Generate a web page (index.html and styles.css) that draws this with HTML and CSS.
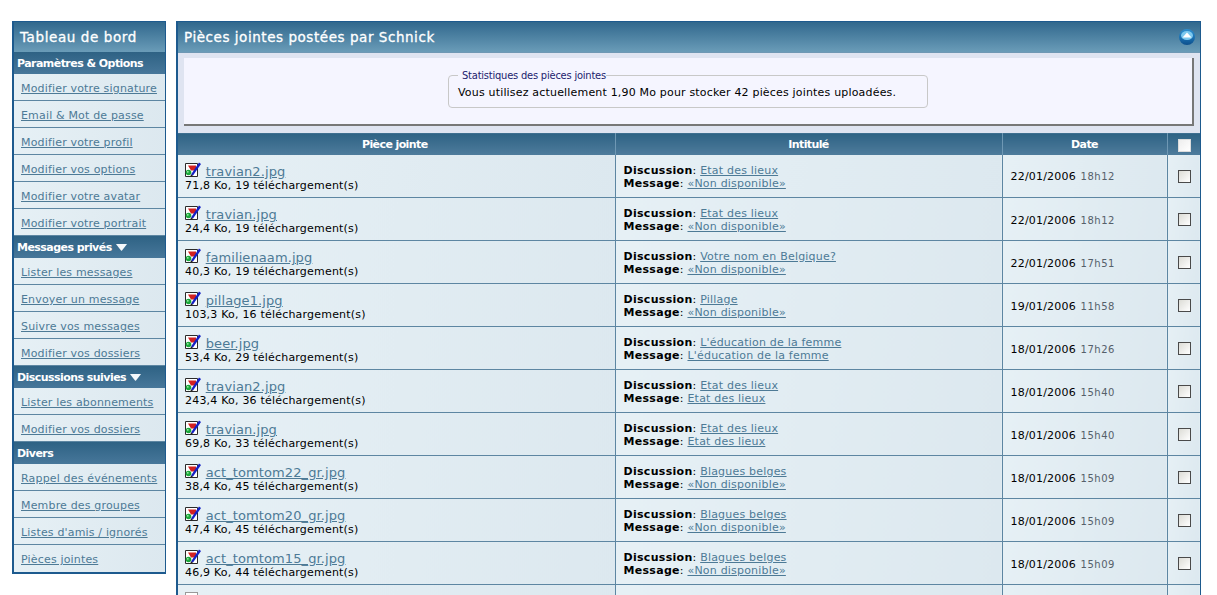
FILE: index.html
```html
<!DOCTYPE html>
<html lang="fr">
<head>
<meta charset="utf-8">
<title>Pièces jointes</title>
<link rel="stylesheet" href="styles.css">
</head>
<body>
<svg class="defs" width="0" height="0">
  <defs>
    <linearGradient id="ball" x1="0" y1="0" x2="0" y2="1">
      <stop offset="0" stop-color="#2f8fcf"/>
      <stop offset=".55" stop-color="#1a6fb0"/>
      <stop offset="1" stop-color="#0d4f8c"/>
    </linearGradient>
    <symbol id="file" viewBox="0 0 16 16">
      <path d="M.5 1.500h12v13H.5z" fill="#fff" stroke="#2a2a2a"/>
      <path d="M3 3.500h8v5H6z" fill="#d22020"/>
      <circle cx="3.500" cy="10.500" r="2.800" fill="#1aa83a"/>
      <circle cx="2.800" cy="9.800" r=".9" fill="#a8f0b0"/>
      <path d="M6 12.500L14 .5l2 1.500-8 11.500z" fill="#1420c4"/>
      <path d="M6 12.500l-.8 2.500 2.800-1.500z" fill="#222"/>
    </symbol>
    <symbol id="down" viewBox="0 0 11 7">
      <path d="M.5 0h10q.5 0 .2.600L6 6.500q-.5.500-1 0L.3.600Q0 0 .5 0z" fill="#f4f8fb"/>
    </symbol>
  </defs>
</svg>
<div class="page">
  <aside class="side">
    <h2 class="side-title">Tableau de bord</h2>
    <h3 class="side-head">Paramètres &amp; Options</h3>
    <a class="side-link" href="#">Modifier votre signature</a>
    <a class="side-link" href="#">Email &amp; Mot de passe</a>
    <a class="side-link" href="#">Modifier votre profil</a>
    <a class="side-link" href="#">Modifier vos options</a>
    <a class="side-link" href="#">Modifier votre avatar</a>
    <a class="side-link" href="#">Modifier votre portrait</a>
    <h3 class="side-head">Messages privés <svg class="arrow"><use href="#down"/></svg></h3>
    <a class="side-link" href="#">Lister les messages</a>
    <a class="side-link" href="#">Envoyer un message</a>
    <a class="side-link" href="#">Suivre vos messages</a>
    <a class="side-link" href="#">Modifier vos dossiers</a>
    <h3 class="side-head">Discussions suivies <svg class="arrow"><use href="#down"/></svg></h3>
    <a class="side-link" href="#">Lister les abonnements</a>
    <a class="side-link" href="#">Modifier vos dossiers</a>
    <h3 class="side-head">Divers</h3>
    <a class="side-link" href="#">Rappel des événements</a>
    <a class="side-link" href="#">Membre des groupes</a>
    <a class="side-link" href="#">Listes d'amis / ignorés</a>
    <a class="side-link last" href="#">Pièces jointes</a>
  </aside>
  <main class="main">
    <div class="main-title">
      <span>Pièces jointes postées par Schnick</span>
      <svg class="collapse" width="16" height="16" viewBox="0 0 16 16">
        <circle cx="8" cy="8" r="8" fill="url(#ball)"/>
        <ellipse cx="8" cy="6.500" rx="6" ry="4.500" fill="#7cc8ee"/>
        <path d="M8 3.500L12.500 8.500h-9z" fill="#fff"/>
      </svg>
    </div>
    <div class="stats">
      <div class="stats-panel">
        <fieldset class="stats-box">
          <legend>Statistiques des pièces jointes</legend>
          Vous utilisez actuellement 1,90 Mo pour stocker 42 pièces jointes uploadées.
        </fieldset>
      </div>
    </div>
    <table class="list">
      <colgroup><col class="c1"><col class="c2"><col class="c3"><col class="c4"></colgroup>
      <thead>
        <tr><th>Pièce jointe</th><th>Intitulé</th><th>Date</th><th><span class="box head-box"></span></th></tr>
      </thead>
      <tbody>
        <tr><td><svg class="ico"><use href="#file"/></svg> <a class="fn" href="#">travian2.jpg</a><br>71,8 Ko, 19 téléchargement(s)</td><td><b>Discussion</b>: <a href="#">Etat des lieux</a><br><b>Message</b>: <a href="#">«Non disponible»</a></td><td>22/01/2006 <span class="time">18h12</span></td><td class="chk"><span class="box"></span></td></tr>
        <tr><td><svg class="ico"><use href="#file"/></svg> <a class="fn" href="#">travian.jpg</a><br>24,4 Ko, 19 téléchargement(s)</td><td><b>Discussion</b>: <a href="#">Etat des lieux</a><br><b>Message</b>: <a href="#">«Non disponible»</a></td><td>22/01/2006 <span class="time">18h12</span></td><td class="chk"><span class="box"></span></td></tr>
        <tr><td><svg class="ico"><use href="#file"/></svg> <a class="fn" href="#">familienaam.jpg</a><br>40,3 Ko, 19 téléchargement(s)</td><td><b>Discussion</b>: <a href="#">Votre nom en Belgique?</a><br><b>Message</b>: <a href="#">«Non disponible»</a></td><td>22/01/2006 <span class="time">17h51</span></td><td class="chk"><span class="box"></span></td></tr>
        <tr><td><svg class="ico"><use href="#file"/></svg> <a class="fn" href="#">pillage1.jpg</a><br>103,3 Ko, 16 téléchargement(s)</td><td><b>Discussion</b>: <a href="#">Pillage</a><br><b>Message</b>: <a href="#">«Non disponible»</a></td><td>19/01/2006 <span class="time">11h58</span></td><td class="chk"><span class="box"></span></td></tr>
        <tr><td><svg class="ico"><use href="#file"/></svg> <a class="fn" href="#">beer.jpg</a><br>53,4 Ko, 29 téléchargement(s)</td><td><b>Discussion</b>: <a href="#">L'éducation de la femme</a><br><b>Message</b>: <a href="#">L'éducation de la femme</a></td><td>18/01/2006 <span class="time">17h26</span></td><td class="chk"><span class="box"></span></td></tr>
        <tr><td><svg class="ico"><use href="#file"/></svg> <a class="fn" href="#">travian2.jpg</a><br>243,4 Ko, 36 téléchargement(s)</td><td><b>Discussion</b>: <a href="#">Etat des lieux</a><br><b>Message</b>: <a href="#">Etat des lieux</a></td><td>18/01/2006 <span class="time">15h40</span></td><td class="chk"><span class="box"></span></td></tr>
        <tr><td><svg class="ico"><use href="#file"/></svg> <a class="fn" href="#">travian.jpg</a><br>69,8 Ko, 33 téléchargement(s)</td><td><b>Discussion</b>: <a href="#">Etat des lieux</a><br><b>Message</b>: <a href="#">Etat des lieux</a></td><td>18/01/2006 <span class="time">15h40</span></td><td class="chk"><span class="box"></span></td></tr>
        <tr><td><svg class="ico"><use href="#file"/></svg> <a class="fn" href="#">act_tomtom22_gr.jpg</a><br>38,4 Ko, 45 téléchargement(s)</td><td><b>Discussion</b>: <a href="#">Blagues belges</a><br><b>Message</b>: <a href="#">«Non disponible»</a></td><td>18/01/2006 <span class="time">15h09</span></td><td class="chk"><span class="box"></span></td></tr>
        <tr><td><svg class="ico"><use href="#file"/></svg> <a class="fn" href="#">act_tomtom20_gr.jpg</a><br>47,4 Ko, 45 téléchargement(s)</td><td><b>Discussion</b>: <a href="#">Blagues belges</a><br><b>Message</b>: <a href="#">«Non disponible»</a></td><td>18/01/2006 <span class="time">15h09</span></td><td class="chk"><span class="box"></span></td></tr>
        <tr><td><svg class="ico"><use href="#file"/></svg> <a class="fn" href="#">act_tomtom15_gr.jpg</a><br>46,9 Ko, 44 téléchargement(s)</td><td><b>Discussion</b>: <a href="#">Blagues belges</a><br><b>Message</b>: <a href="#">«Non disponible»</a></td><td>18/01/2006 <span class="time">15h09</span></td><td class="chk"><span class="box"></span></td></tr>
        <tr><td class="stub"><span class="stub-page"></span></td><td></td><td></td><td class="chk"></td></tr>
      </tbody>
    </table>
  </main>
</div>
</body>
</html>
```
FILE: styles.css
```css
html { overflow: hidden; }
body {
  margin: 0;
  background: #fff;
  font-family: "DejaVu Sans", Verdana, sans-serif;
  font-size: 11px;
  color: #000;
}
.defs { position: absolute; }
.page {
  display: flex;
  align-items: flex-start;
  gap: 10px;
  padding: 21px 16px 0 12px;
}
a { color: #4d7a96; }

.side {
  flex: 0 0 154px;
  box-sizing: border-box;
  border: 1px solid #1d5a8e;
  border-width: 1px 1px 2px 2px;
  background: #e0ebf2;
  display: flex;
  flex-direction: column;
}
.side-title {
  margin: 0;
  height: 30px;
  padding-left: 6px;
  font-size: 13.5px;
  font-weight: 400;
  letter-spacing: .6px;
  line-height: 30px;
  color: #fff;
  -webkit-text-stroke: .3px #fff;
  background: linear-gradient(#31688d, #6a9cb8);
}
.side-head {
  margin: 0;
  height: 22px;
  padding-left: 3px;
  font-size: 11px;
  line-height: 24px;
  letter-spacing: -.55px;
  color: #fff;
  background: linear-gradient(#2e6284, #47779a);
  overflow: hidden;
}
.arrow { width: 11px; height: 7px; margin-left: 1px; }
.side-link {
  box-sizing: border-box;
  height: 27px;
  padding-left: 7px;
  line-height: 30px;
  font-size: 11px;
  letter-spacing: .17px;
  border-bottom: 1px solid #5d86a2;
  background: linear-gradient(100deg, #e6f0f5, #dce8ef);
}
.side-link.last { border-bottom: 0; }

.main {
  flex: 1 1 auto;
  min-width: 0;
  box-sizing: border-box;
  border: 1px solid #1d5a8e;
  border-width: 1px 1px 0 2px;
  background: #e0ebf2;
}
.main-title {
  display: flex;
  align-items: center;
  justify-content: space-between;
  height: 30px;
  padding: 0 5px 0 6px;
  font-size: 13.5px;
  letter-spacing: .55px;
  color: #fff;
  -webkit-text-stroke: .3px #fff;
  background: linear-gradient(#31688d, #6a9cb8);
}
.stats {
  height: 80px;
  box-sizing: border-box;
  padding: 5px 6px 5px 6px;
  background: #dfe4f1;
  border-top: 1px solid #6f98b4;
  border-bottom: 1px solid #dfe4f1;
}
.stats-panel {
  height: 100%;
  box-sizing: border-box;
  padding: 11px 0 0 0;
  background: #f5f5ff;
  border-right: 2px solid #777;
  border-bottom: 2px solid #777;
  display: flex;
  justify-content: center;
}
.stats-box {
  width: 480px;
  height: 39px;
  box-sizing: border-box;
  margin: 0;
  padding: 3px 9px 0;
  border: 1px solid #c8c8c8;
  border-radius: 4px;
  line-height: 17px;
  letter-spacing: .18px;
}
.stats-box legend {
  padding: 2px 0 0 4px;
  margin-left: 0;
  line-height: 10px;
  color: #22226e;
  font-family: "DejaVu Sans Condensed", "Noto Sans", sans-serif;
  letter-spacing: -.2px;
}

.list {
  width: 1022px;
  border-collapse: collapse;
  table-layout: fixed;
}
.c1 { width: 437px; }
.c2 { width: 387px; }
.c3 { width: 165px; }
.c4 { width: 33px; }
.list th {
  box-sizing: border-box;
  height: 22px;
  padding: 2px 0 0;
  font-size: 11px;
  letter-spacing: -.6px;
  color: #fff;
  background: linear-gradient(#2e6284, #4f7c9c);
  border-left: 1px solid #6f98b4;
  border-top: 1px solid #dfe4f1;
}
.list th:first-child { border-left: 0; padding-right: 3px; }
.list td {
  box-sizing: border-box;
  height: 43px;
  padding: 2px 0 0 8px;
  line-height: 13px;
  letter-spacing: .2px;
  background: linear-gradient(100deg, #e6f0f5, #dce8ef);
  border-left: 1px solid #5d86a2;
  border-bottom: 1px solid #5d86a2;
}
.list td:first-child { border-left: 0; padding-left: 7px; }
.list td.chk { padding: 0 0 0 2px; text-align: center; }
.list th:last-child { padding-left: 2px; }
.list td b { letter-spacing: .3px; }
.fn { font-size: 13px; letter-spacing: .1px; }
.ico { width: 16px; height: 16px; vertical-align: -2px; margin-right: 1px; }
.time { color: #55606a; font-size: 10px; letter-spacing: .5px; margin-left: 1px; }
.box {
  display: inline-block;
  box-sizing: border-box;
  width: 13px;
  height: 13px;
  border: 1px solid #4a4a4a;
  background: linear-gradient(135deg, #dcdcd6, #fff);
  vertical-align: middle;
}
.head-box { border-color: #dcdcdc; background: linear-gradient(135deg, #eee, #fff); }
.stub { vertical-align: top; }
.stub-page {
  display: block;
  box-sizing: border-box;
  width: 13px;
  height: 12px;
  margin: 5px 0 0 0;
  border: 1px solid #999;
  background: #fff;
}
```
